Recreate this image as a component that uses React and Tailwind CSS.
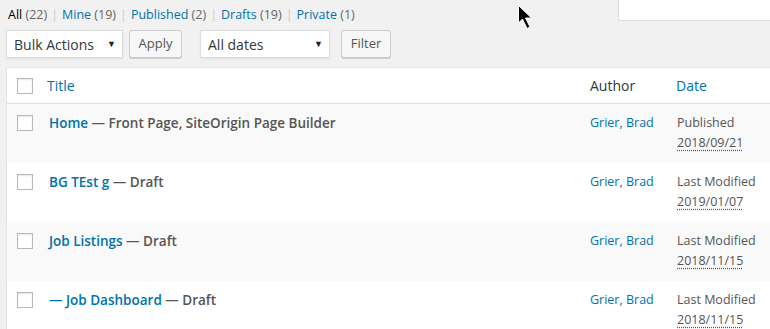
import React from "react";

const rows = [
  { title: "Home", suffix: " — Front Page, SiteOrigin Page Builder", status: "Published", date: "2018/09/21", alt: true },
  { title: "BG TEst g", suffix: " — Draft", status: "Last Modified", date: "2019/01/07", alt: false },
  { title: "Job Listings", suffix: " — Draft", status: "Last Modified", date: "2018/11/15", alt: true },
  { title: "— Job Dashboard", suffix: " — Draft", status: "Last Modified", date: "2018/11/15", alt: false },
];

function Checkbox() {
  return <div className="w-4 h-4 bg-white border border-[#b4b9be] shadow-[inset_0_1px_2px_rgba(0,0,0,0.1)]" />;
}

function Select({ label, width }) {
  return (
    <div className={`h-[28px] ${width} bg-white border border-[#ddd] shadow-[0_1px_2px_rgba(0,0,0,0.07)] flex items-center justify-between pl-[7px] pr-[6px] text-[14px] text-[#32373c]`}>
      <span>{label}</span>
      <span className="text-[9px] text-[#222]">▼</span>
    </div>
  );
}

function Button({ label, width }) {
  return (
    <div className={`h-[28px] ${width} bg-[#f7f7f7] border border-[#ccc] rounded-[3px] shadow-[0_1px_0_#ccc] flex items-center justify-center text-[13px] text-[#555]`}>
      {label}
    </div>
  );
}

export default function App() {
  return (
    <div className="relative w-[770px] h-[329px] overflow-hidden bg-[#f1f1f1]" style={{ fontFamily: '"Open Sans", "Noto Sans", sans-serif' }}>
      <div className="absolute right-0 top-0 w-[152px] h-[21px] bg-white border-l border-b border-[#ddd]" />
      <svg className="absolute left-[518px] top-[5px]" width="16" height="28" viewBox="0 0 16 28">
        <polygon points="0.5,0.5 0.5,18 4.5,14 9,23.5 12,22 7.5,13 13.5,13" fill="#000" stroke="#fff" strokeWidth="1" />
      </svg>

      <div className="pt-[5px] pl-[8px] text-[12.5px] leading-[19px] text-[#666] flex items-center gap-[4px]">
        <span><span className="text-black">All</span> (22)</span>
        <span className="text-[#ccc]">|</span>
        <span className="text-[#0073aa]">Mine <span className="text-[#666]">(19)</span></span>
        <span className="text-[#ccc]">|</span>
        <span className="text-[#0073aa]">Published <span className="text-[#666]">(2)</span></span>
        <span className="text-[#ccc]">|</span>
        <span className="text-[#0073aa]">Drafts <span className="text-[#666]">(19)</span></span>
        <span className="text-[#ccc]">|</span>
        <span className="text-[#0073aa]">Private <span className="text-[#666]">(1)</span></span>
      </div>

      <div className="mt-[6px] pl-[6px] flex items-center">
        <Select label="Bulk Actions" width="w-[117px]" />
        <div className="w-[6px]" />
        <Button label="Apply" width="w-[53px]" />
        <div className="w-[18px]" />
        <Select label="All dates" width="w-[130px]" />
        <div className="w-[11px]" />
        <Button label="Filter" width="w-[50px]" />
      </div>

      <div className="mt-[9px] ml-[6px] w-[800px] bg-white border border-[#e5e5e5] shadow-[0_1px_1px_rgba(0,0,0,0.04)]">
        <div className="h-[36px] flex items-center border-b border-[#e1e1e1] text-[14px]">
          <div className="w-[40px] pl-[10px] flex items-center"><Checkbox /></div>
          <div className="w-[543px] text-[#0073aa]">Title</div>
          <div className="w-[87px] text-[#32373c]">Author</div>
          <div className="-ml-[1px] text-[#0073aa]">Date</div>
        </div>
        {rows.map((r, i) => (
          <div key={i} className={`h-[59px] flex items-start pt-[9px] ${r.alt ? "bg-[#f9f9f9]" : "bg-white"}`}>
            <div className="w-[40px] pl-[10px] pt-[2px] flex"><Checkbox /></div>
            <div className="w-[543px] pl-[2px] text-[13.5px] font-semibold leading-[20px]">
              <span className="text-[#0073aa]">{r.title}</span>
              <span className="text-[#555]">{r.suffix}</span>
            </div>
            <div className="w-[87px] text-[12.5px] leading-[20px] text-[#0073aa]">Grier, Brad</div>
            <div className="text-[12.5px] leading-[20px] text-[#555]">
              <div>{r.status}</div>
              <div className="underline decoration-dotted decoration-[#555] underline-offset-[3px]">{r.date}</div>
            </div>
          </div>
        ))}
      </div>
    </div>
  );
}
